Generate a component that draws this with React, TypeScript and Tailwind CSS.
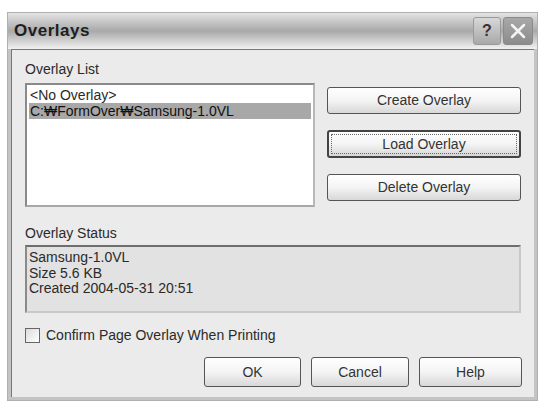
import React from 'react';

const font = { fontFamily: '"Liberation Sans", Arial, sans-serif' };

function Btn({ label, focus = false, className = '' }: { label: string; focus?: boolean; className?: string }) {
  return (
    <div
      className={`flex items-center justify-center rounded-[3px] bg-gradient-to-b from-white via-[#f4f4f4] to-[#d8d8d8] text-[14px] text-[#333] ${
        focus ? 'border-2 border-[#444]' : 'border border-[#555]'
      } ${className}`}
    >
      {focus ? (
        <div className="m-[2px] flex h-[calc(100%-4px)] w-[calc(100%-4px)] items-center justify-center border border-dotted border-[#666]">
          {label}
        </div>
      ) : (
        label
      )}
    </div>
  );
}

export default function App() {
  return (
    <div className="h-[404px] w-[543px] overflow-hidden bg-white pl-[7px] pt-[12px]" style={font}>
      <div className="flex h-[389px] w-[531px] flex-col border border-[#b0b0b0] bg-[#c4c4c4]">
        {/* title bar */}
        <div className="flex h-[36px] items-center justify-between bg-gradient-to-b from-[#e4e4e4] via-[#a9a9a9] to-[#f2f2f2] pl-[6px] pr-[4px]">
          <span className="text-[17px] font-bold tracking-[0.5px] text-[#1e1e1e]">Overlays</span>
          <div className="flex gap-[2px]">
            <div className="flex h-[28px] w-[28px] items-center justify-center rounded-[3px] border border-[#9a9a9a] bg-gradient-to-b from-[#d8d8d8] to-[#a8a8a8] text-[16px] font-bold text-[#333]">
              ?
            </div>
            <div className="flex h-[28px] w-[30px] items-center justify-center rounded-[3px] border border-[#8a8a8a] bg-gradient-to-b from-[#a8a8a8] to-[#8c8c8c]">
              <svg width="18" height="18" viewBox="0 0 18 18">
                <path d="M3 3 L15 15 M15 3 L3 15" stroke="#f4f4f4" strokeWidth="2.5" strokeLinecap="round" />
              </svg>
            </div>
          </div>
        </div>
        {/* client */}
        <div className="mx-[3px] mb-[3px] flex flex-1 flex-col border-t border-l border-[#777] bg-[#ebebeb] pl-[13px] pr-[12px] pt-[11px] text-[14px] text-[#2a2a2a]">
          <div className="leading-[16px]">Overlay List</div>
          <div className="mt-[6px] flex">
            <div className="h-[124px] w-[290px] border-2 border-t-[#8a8a8a] border-l-[#8a8a8a] border-r-[#b8b8b8] border-b-[#a8a8a8] bg-white px-[2px] pt-[2px] leading-[16px]">
              <div className="pl-[1px]">&lt;No Overlay&gt;</div>
              <div className="bg-[#a8a8a8] pl-[1px] text-[#111]">C:₩FormOver₩Samsung-1.0VL</div>
            </div>
            <div className="ml-[12px] mt-[4px] flex flex-col gap-[16px]">
              <Btn label="Create Overlay" className="h-[27px] w-[194px]" />
              <Btn label="Load Overlay" focus className="h-[28px] w-[194px]" />
              <Btn label="Delete Overlay" className="h-[27px] w-[194px]" />
            </div>
          </div>
          <div className="mt-[18px] leading-[16px]">Overlay Status</div>
          <div className="mt-[4px] h-[68px] w-[496px] border-2 border-t-[#6e6e6e] border-l-[#8a8a8a] border-r-[#c8c8c8] border-b-[#c8c8c8] bg-[#e2e2e2] pl-[2px] pt-[3px] leading-[15.5px]">
            <div>Samsung-1.0VL</div>
            <div>Size 5.6 KB</div>
            <div>Created 2004-05-31 20:51</div>
          </div>
          <div className="mt-[14px] flex items-center gap-[6px] leading-[16px]">
            <div className="h-[15px] w-[15px] border border-[#666] bg-gradient-to-br from-[#dcdcdc] to-white" />
            <span>Confirm Page Overlay When Printing</span>
          </div>
          <div className="mt-[14px] flex justify-end gap-[10px] pr-[0px]">
            <Btn label="OK" className="h-[30px] w-[97px]" />
            <Btn label="Cancel" className="h-[30px] w-[98px]" />
            <Btn label="Help" className="h-[30px] w-[103px]" />
          </div>
        </div>
      </div>
    </div>
  );
}
